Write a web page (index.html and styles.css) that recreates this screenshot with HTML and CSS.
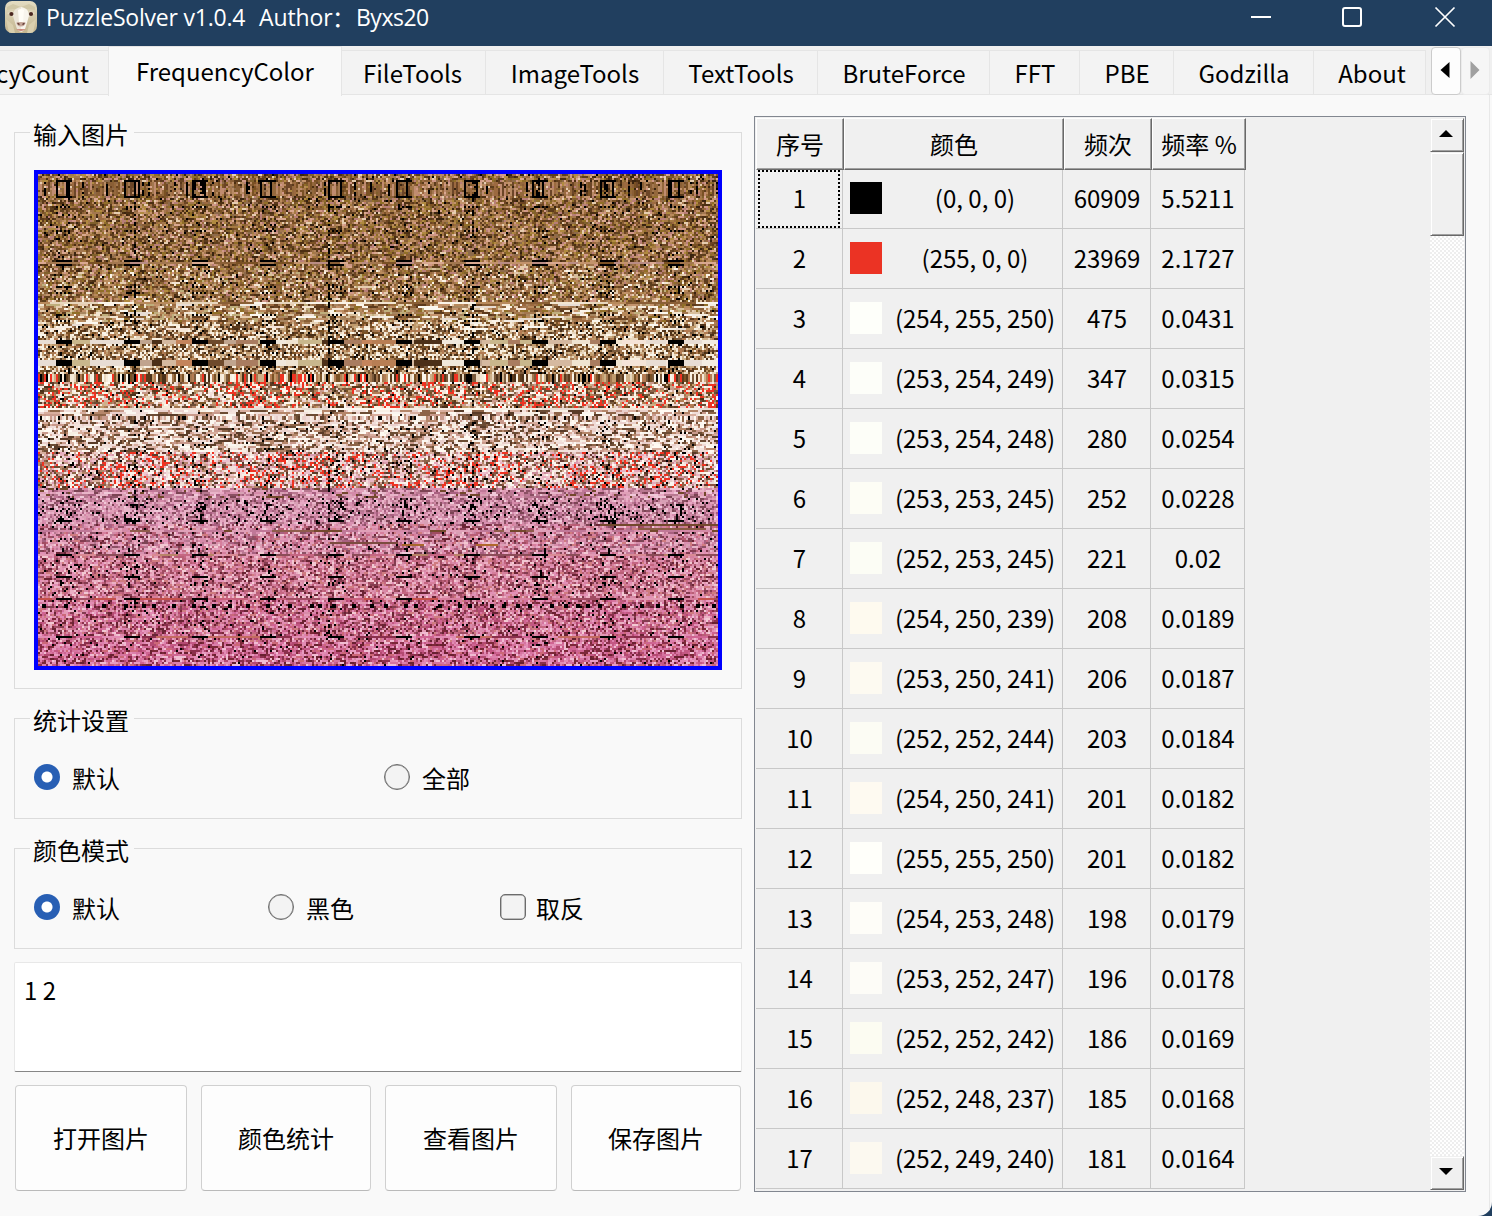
FILE: index.html
```html
<!DOCTYPE html>
<html lang="zh-CN">
<head>
<meta charset="utf-8">
<title>PuzzleSolver v1.0.4</title>
<link rel="stylesheet" href="styles.css">
</head>
<body>
<div class="window">
  <header class="titlebar">
    <svg class="logo" width="32" height="32" viewBox="0 0 32 32">
      <defs>
        <linearGradient id="wool" x1="0" y1="0" x2="0" y2="1"><stop offset="0" stop-color="#e3dcc2"/><stop offset="1" stop-color="#c3b58f"/></linearGradient>
        <clipPath id="tile"><rect width="32" height="32" rx="7"/></clipPath>
      </defs>
      <g clip-path="url(#tile)">
        <rect width="32" height="32" fill="url(#wool)"/>
        <path d="M2 6 8 3 16 6 24 3 30 6 30 9 22 8 16 9 8 8 2 9Z" fill="#d0c7a6"/>
        <path d="M1 18 8 24 10 32 4 32ZM31 18 24 24 22 32 28 32Z" fill="#d9cfae"/>
        <path d="M2 12 8 10 8 16ZM30 12 24 10 24 16Z" fill="#e9dfc8"/>
        <path d="M16 6C10 7 8 10 8 15L11 25Q12 30 16 31Z" fill="#ebe5d8"/>
        <path d="M16 6C22 7 24 10 24 15L21 25Q20 30 16 31Z" fill="#f8f5ed"/>
        <path d="M13 9Q16 7 19 9L18 21 14 21Z" fill="#fffdf6"/>
        <circle cx="6.4" cy="13" r="2.1" fill="#4a2720"/><circle cx="26" cy="13" r="2.1" fill="#4a2720"/>
        <path d="M11.500 21.500Q16 20.500 20.500 21.500 20.500 24.500 16.800 25.600L16 25.200 15.200 25.600Q11.500 24.500 11.500 21.500Z" fill="#c4a598"/>
        <path d="M12 22Q14 21 15 23.500L13.500 24ZM20 22Q18 21 17 23.500L18.500 24Z" fill="#6a443c"/>
        <path d="M11 28.300Q16 27.600 21 28.300 16 31.500 11 28.300Z" fill="#c98778"/>
      </g>
    </svg>
    <span class="title-name">PuzzleSolver v1.0.4</span>
    <span class="title-author">Author</span>
    <span class="title-colon">：</span>
    <span class="title-user">Byxs20</span>
    <svg class="win-controls" width="208" height="32" viewBox="0 0 208 32" fill="none" stroke="#fff">
      <path d="M3 17H23" stroke-width="2"/>
      <rect x="95" y="8" width="18" height="18" rx="2" stroke-width="2"/>
      <path d="M187.500 7.500 206.500 26.500M206.500 7.500 187.500 26.500" stroke-width="1.700"/>
    </svg>
  </header>

  <nav class="tabs">
    <div class="tab tab-cut"><span>cyCount</span></div>
    <div class="tab tab-active">FrequencyColor</div>
    <div class="tab tab-file">FileTools</div>
    <div class="tab tab-image">ImageTools</div>
    <div class="tab tab-text">TextTools</div>
    <div class="tab tab-brute">BruteForce</div>
    <div class="tab tab-fft">FFT</div>
    <div class="tab tab-pbe">PBE</div>
    <div class="tab tab-godzilla">Godzilla</div>
    <div class="tab tab-about">About</div>
    <div class="tab-scroll"><svg width="10" height="16" viewBox="0 0 10 16"><path d="M9.500 0V16L.5 8Z" fill="#000"/></svg></div>
    <div class="tab-scroll tab-scroll-off"><svg width="10" height="18" viewBox="0 0 10 18"><path d="M.5 0V18L9.500 9Z" fill="#a0a0a0"/></svg></div>
  </nav>

  <main class="page">
    <section class="left">
      <div class="group group-image">
        <span class="group-label">输入图片</span>
        <canvas class="picture" id="picture" width="340" height="246"></canvas>
      </div>
      <div class="group group-options">
        <span class="group-label">统计设置</span>
        <div class="options two">
          <label class="option"><i class="radio on"></i>默认</label>
          <label class="option"><i class="radio"></i>全部</label>
        </div>
      </div>
      <div class="group group-options">
        <span class="group-label">颜色模式</span>
        <div class="options three">
          <label class="option"><i class="radio on"></i>默认</label>
          <label class="option"><i class="radio"></i>黑色</label>
          <label class="option check-option"><i class="check"></i>取反</label>
        </div>
      </div>
      <div class="textbox">1 2</div>
      <div class="buttons">
        <button class="btn">打开图片</button>
        <button class="btn">颜色统计</button>
        <button class="btn">查看图片</button>
        <button class="btn">保存图片</button>
      </div>
    </section>

    <section class="table-frame">
      <div class="table">
        <div class="thead"><div>序号</div><div>颜色</div><div>频次</div><div>频率 %</div></div>
        <div class="row row-first"><div class="focused">1</div><div class="color"><i style="background:#000"></i><span>(0, 0, 0)</span></div><div>60909</div><div>5.5211</div></div>
        <div class="row"><div>2</div><div class="color"><i style="background:#eb3324"></i><span>(255, 0, 0)</span></div><div>23969</div><div>2.1727</div></div>
        <div class="row"><div>3</div><div class="color"><i style="background:rgb(254,255,250)"></i><span>(254, 255, 250)</span></div><div>475</div><div>0.0431</div></div>
        <div class="row"><div>4</div><div class="color"><i style="background:rgb(253,254,249)"></i><span>(253, 254, 249)</span></div><div>347</div><div>0.0315</div></div>
        <div class="row"><div>5</div><div class="color"><i style="background:rgb(253,254,248)"></i><span>(253, 254, 248)</span></div><div>280</div><div>0.0254</div></div>
        <div class="row"><div>6</div><div class="color"><i style="background:rgb(253,253,245)"></i><span>(253, 253, 245)</span></div><div>252</div><div>0.0228</div></div>
        <div class="row"><div>7</div><div class="color"><i style="background:rgb(252,253,245)"></i><span>(252, 253, 245)</span></div><div>221</div><div>0.02</div></div>
        <div class="row"><div>8</div><div class="color"><i style="background:rgb(254,250,239)"></i><span>(254, 250, 239)</span></div><div>208</div><div>0.0189</div></div>
        <div class="row"><div>9</div><div class="color"><i style="background:rgb(253,250,241)"></i><span>(253, 250, 241)</span></div><div>206</div><div>0.0187</div></div>
        <div class="row"><div>10</div><div class="color"><i style="background:rgb(252,252,244)"></i><span>(252, 252, 244)</span></div><div>203</div><div>0.0184</div></div>
        <div class="row"><div>11</div><div class="color"><i style="background:rgb(254,250,241)"></i><span>(254, 250, 241)</span></div><div>201</div><div>0.0182</div></div>
        <div class="row"><div>12</div><div class="color"><i style="background:rgb(255,255,250)"></i><span>(255, 255, 250)</span></div><div>201</div><div>0.0182</div></div>
        <div class="row"><div>13</div><div class="color"><i style="background:rgb(254,253,248)"></i><span>(254, 253, 248)</span></div><div>198</div><div>0.0179</div></div>
        <div class="row"><div>14</div><div class="color"><i style="background:rgb(253,252,247)"></i><span>(253, 252, 247)</span></div><div>196</div><div>0.0178</div></div>
        <div class="row"><div>15</div><div class="color"><i style="background:rgb(252,252,242)"></i><span>(252, 252, 242)</span></div><div>186</div><div>0.0169</div></div>
        <div class="row"><div>16</div><div class="color"><i style="background:rgb(252,248,237)"></i><span>(252, 248, 237)</span></div><div>185</div><div>0.0168</div></div>
        <div class="row"><div>17</div><div class="color"><i style="background:rgb(252,249,240)"></i><span>(252, 249, 240)</span></div><div>181</div><div>0.0164</div></div>
      </div>
      <div class="scrollbar">
        <div class="bevel step"><svg width="14" height="7" viewBox="0 0 14 7"><path d="M0 7H14L7 0Z"/></svg></div>
        <div class="bevel thumb"></div>
        <div class="track"></div>
        <div class="bevel step"><svg width="14" height="7" viewBox="0 0 14 7"><path d="M0 0H14L7 7Z"/></svg></div>
      </div>
    </section>
  </main>
</div>
<script src="picture.js"></script>
</body>
</html>
```
FILE: styles.css
```css
* { box-sizing: border-box; }
body {
  margin: 0;
  background: #213f5f;
  font-family: "Noto Sans CJK SC", sans-serif;
  font-size: 24px;
  line-height: 36px;
  color: #000;
}
i { font-style: normal; flex: none; }
.window {
  width: 1492px;
  height: 1216px;
  overflow: hidden;
  background: #f9f9f9;
  border-bottom-right-radius: 14px;
}

/* title bar */
.titlebar {
  display: flex;
  height: 46px;
  padding-left: 5px;
  background: #213f5f;
  color: #fff;
  font-family: "Open Sans", sans-serif;
  font-size: 23px;
  line-height: 35px;
  white-space: pre;
}
.logo { margin-top: 1px; flex: none; }
.title-name { width: 213px; margin-left: 9px; letter-spacing: -.21px; }
.title-author { width: 73px; letter-spacing: -.1px; }
.title-colon { width: 24px; font-family: "Noto Sans CJK SC", sans-serif; }
.title-user { width: 892px; letter-spacing: -.5px; }
.win-controls { flex: none; }

/* tab strip */
.tabs {
  display: flex;
  height: 49px;
  align-items: flex-end;
  background: #f0f0f0;
  box-shadow: inset 0 -1px #e5e5e5;
}
.tab {
  flex: none;
  display: flex;
  justify-content: center;
  align-items: center;
  height: 45px;
  padding-top: 1px;
  padding-left: 1px;
  background: #f3f3f3;
  border: 1px solid #e5e5e5;
  border-left: 0;
}
.tab-cut { width: 108px; justify-content: flex-end; padding-right: 19px; overflow: hidden; border-right: 0; }
.tab-active {
  width: 234px;
  height: 50px;
  margin-bottom: -1px;
  padding: 0 0 2px;
  background: #f9f9f9;
  border-left: 1px solid #e5e5e5;
  border-bottom: 0;
}
.tab-file { width: 144px; padding-right: 3px; }
.tab-image { width: 178px; }
.tab-text { width: 154px; }
.tab-brute { width: 172px; }
.tab-fft { width: 90px; }
.tab-pbe { width: 94px; }
.tab-godzilla { width: 140px; }
.tab-about { width: 112px; padding-left: 5px; }
.tab-scroll {
  flex: none;
  display: flex;
  align-items: center;
  justify-content: center;
  width: 30px;
  height: 48px;
  margin-left: 5px;
  padding: 0 2px 3px 0;
  background: #fdfdfd;
  border: 1px solid #ccc;
  border-radius: 4px;
}
.tab-scroll-off { margin-left: 0; width: 29px; background: #f6f6f6; border-color: #ebebeb; }

/* page */
.page {
  display: flex;
  height: 1121px;
  margin-right: 2px;
  padding: 21px 23px 0 14px;
  border-right: 1px solid #e8e8e8;
}
.left { width: 728px; margin-right: 12px; padding-top: 16px; }
.group { position: relative; border: 1px solid #dcdcdc; }
.group-label {
  position: absolute;
  left: 15px;
  top: -17px;
  padding: 0 5px 0 3px;
  background: #f9f9f9;
}
.group-image { height: 557px; padding: 37px 0 0 19px; }
.picture {
  display: block;
  width: 688px;
  height: 500px;
  border: 4px solid #00f;
  image-rendering: pixelated;
}
.group-options { height: 101px; margin-top: 29px; padding: 41px 0 0 19px; }
.options { display: grid; }
.two { grid-template-columns: 350px 1fr; }
.three { grid-template-columns: 234px 232px 1fr; }
.option { display: flex; align-items: center; gap: 12px; }
.radio, .check {
  width: 26px;
  height: 26px;
  margin-top: -2px;
  background: #f3f3f3;
  border: 1px solid #6c6c6c;
  box-shadow: inset 0 0 0 .5px #858585;
  border-radius: 50%;
}
.radio.on {
  border: 0;
  box-shadow: none;
  background: radial-gradient(circle, #fff 5px, #285fb4 6px);
}
.check { border-radius: 5px; }
.check-option { gap: 10px; }
.textbox {
  height: 110px;
  margin-top: 13px;
  padding: 9px;
  background: #fff;
  border: 1px solid #e8e8e8;
  border-bottom-color: #868686;
  border-radius: 2px;
}
.buttons {
  display: grid;
  grid-template-columns: 172px 170px 172px 170px;
  gap: 14px;
  margin-top: 13px;
  padding-left: 1px;
}
.btn {
  height: 106px;
  padding: 0;
  font: inherit;
  color: #000;
  background: #fdfdfd;
  border: 1px solid #d0d0d0;
  border-bottom-color: #bababa;
  border-radius: 4px;
}

/* frequency table */
.table-frame {
  display: flex;
  justify-content: space-between;
  width: 712px;
  height: 1076px;
  padding: 1px;
  background: #f0f0f0;
  border: 1px solid #828790;
}
.thead { display: grid; grid-template-columns: 88px 220px 88px 94px; height: 52px; }
.thead > div {
  display: flex;
  align-items: center;
  justify-content: center;
  border: 1px solid;
  border-color: #fff #696969 #696969 #fff;
  box-shadow: inset -1px -1px #a0a0a0;
}
.row { display: grid; grid-template-columns: 87px 220px 88px 94px; width: 489px; height: 60px; }
.row-first { height: 59px; }
.row > div {
  display: flex;
  align-items: center;
  justify-content: center;
  padding: 0 0 2px 1px;
  border: solid #c8c8c8;
  border-width: 0 1px 1px 0;
}
.row > .color { justify-content: flex-start; padding-left: 7px; }
.color i { width: 32px; height: 32px; }
.color span { flex: 1; text-align: center; padding-left: 6px; }
.focused { position: relative; }
.focused::after {
  content: "";
  position: absolute;
  inset: 0 2px 0 2px;
  border: 2px dotted #000;
}

/* scrollbar */
.scrollbar { display: flex; flex-direction: column; width: 34px; }
.bevel {
  display: flex;
  align-items: center;
  justify-content: center;
  background: #f0f0f0;
  border: 1px solid;
  border-color: #f0f0f0 #696969 #696969 #f0f0f0;
  box-shadow: inset 1px 1px #fff, inset -1px -1px #a0a0a0;
}
.step { height: 34px; padding: 0 3px 3px 0; }
.thumb { height: 84px; }
.track { flex: 1; background: conic-gradient(#fff 25%, #eee 0 50%, #fff 0 75%, #eee 0) 0 0 / 4px 4px; }
```
FILE: picture.js
```js
// Paints the loaded picture cell by cell: horizontal bands, each with its own palette.
(function () {
  const W = 340, H = 246;
  const ctx = document.getElementById("picture").getContext("2d");
  let seed = 20104;
  function rnd() {
    seed = (seed + 0x6D2B79F5) | 0;
    let t = Math.imul(seed ^ (seed >>> 15), 1 | seed);
    t = (t + Math.imul(t ^ (t >>> 7), 61 | t)) ^ t;
    return ((t ^ (t >>> 14)) >>> 0) / 4294967296;
  }
  const pick = list => list[Math.floor(rnd() * list.length)];
  const words = s => s.split(" ");
  const brown = words("#a3774f #8a5f36 #5c3a1c #4c2f12 #c3936c #d9a890 #7a5124 #916f28 #b88a5c #3a2410 #e6cdb0 #9c6a40 #b77e78 #6b4422 #a57a42 #8d6a4a #5d3e1c #d09888 #80602c #b08a40");
  const tan = words("#a3774f #8a5f36 #5c3a1c #c3936c #f3e6d2 #fbf4e8 #916f28 #b88a5c #e6cdb0 #9c6a40 #d8bf9c #6b4422 #bfae7c #a88660");
  const check = words("#fbf6ea #f6ead8 #e8d6bd #5c3a1c #7a5a3c #a3774f #c09a6c #7a5124 #b37c53 #4a3018 #f7efe0 #cdb088");
  const cream = words("#fbf6f0 #f3e2dc #ead0cc #f7efe4 #6c4c34 #8d6448 #b5866a #5a3c28 #d8ae9e #f0dcd8 #c99a8c #fffaf2");
  const blush = words("#f0c8cc #e8b4c2 #f5dedc #d99cae #8c5040 #9f6c5c #c98c98 #faf0ea #6a3830 #e6a8bc #eac0cc");
  const mauve = words("#e0a0b8 #d48aa8 #e8b4c8 #c07898 #a86080 #8c5064 #f0c8d8 #d890b0 #7c4454 #b87890 #d8a0b4 #e8a8c4");
  const pink = words("#e39ab4 #d67f9d #c56682 #a14c62 #843c50 #ebb0c4 #f2c8d2 #b95e76 #d88ba8 #6a2434 #cf7c80 #e290b6");
  const rose = words("#dc80ac #cf6492 #b44a72 #8b2f4c #6a2030 #e89cc0 #f0bcd2 #c45884 #d674a0 #7c2838 #cc6878 #e28cb4");

  // first row, palette, chance to repeat the cell on the left, black share, red share
  const bands = [
    [0, brown, .12, .015, 0], [46, brown.concat(tan), .12, .02, 0],
    [64, tan, .4, .01, 0], [74, check, .12, .03, 0], [85, check, .05, .03, 0],
    [96, check, .05, .05, 0], [104, cream.concat(check), .25, .015, .22],
    [117, cream, .68, .01, 0], [121, cream, .2, .03, 0], [124, cream, .38, .025, 0],
    [139, blush.concat(cream), .18, .035, .2], [157, mauve.concat(["#73482c"]), .4, .01, 0],
    [162, mauve, .1, .07, 0], [175, mauve.concat(pink), .2, .02, 0],
    [190, pink, .12, .025, 0], [212, rose.concat(pink), .1, .02, 0], [234, rose, .18, .01, 0]
  ];
  const dot = (x, y, w, h, color) => { ctx.fillStyle = color; ctx.fillRect(x, y, w, h); };
  let band = 0;
  for (let y = 0; y < H; y++) {
    while (band + 1 < bands.length && y >= bands[band + 1][0]) band++;
    const [, palette, repeat, black, red] = bands[band];
    let color = pick(palette);
    for (let x = 0; x < W; x++) {
      const mark = (x + 25) % 34 < 8;
      if (rnd() > repeat) color = pick(palette);
      let c = color;
      const cluster = .75 + .35 * Math.sin(x / 13 + y / 9) + .35 * Math.sin(x / 5.3 - y / 3);
      if (rnd() < red * Math.max(.35, cluster)) c = "#ee3322";
      if (rnd() < black * (mark ? 2.6 : 1)) c = "#000";
      dot(x, y, 1, 1, c);
    }
  }

  // rows that hold one colour per column
  function stripes(top, height, palette, black, red) {
    for (let x = 0; x < W; x++) {
      let c = rnd() < black ? "#000" : pick(palette);
      if (rnd() < red) c = "#ee3322";
      dot(x, top, 1, height, c);
    }
  }
  stripes(4, 7, words("#a3774f #8a5f36 #6c4628 #b88a64 #9c6a40 #c08c70 #7a5124 #94683c"), .09, 0);
  for (let y = 4; y < 11; y++) {
    for (let x = 0; x < W; x++) if (rnd() < .35) dot(x, y, 1, 1, pick(brown));
  }
  stripes(100, 4, check, .14, .13);
  stripes(121, 2, cream, .1, 0);

  // long flat runs of one shade
  function runs(top, height, palette, lo, hi) {
    for (let x = 0; x < W;) {
      const n = lo + Math.floor(rnd() * (hi - lo));
      dot(x, top, n, height, pick(palette));
      x += n;
    }
  }
  const flat = words("#b87e54 #4c3018 #f0e8dc #c9b78c #a97c60 #c0a48e #6e4a2c #d5b9a0 #c4845c #efe3d0");
  const light = words("#f3ece2 #fbf8f0 #f5e4d8 #e8ddd4");
  runs(64, 1, words("#e8d6bd #f3e6d2 #b88a5c #8a5f36 #fbf4e8"), 6, 26);
  for (let i = 0; i < 46; i++) {
    dot(Math.floor(rnd() * W), 65 + Math.floor(rnd() * 14), 4 + Math.floor(rnd() * 9), 1, pick(light));
  }
  for (let x = 0; x < W;) {
    const n = 3 + Math.floor(rnd() * 12);
    const c = pick(x < 42 && x > 25 || x < 9 || x > 285 ? light : flat);
    dot(x, 83, n, 2, c);
    dot(x, 93, n, 3, c);
    x += n;
  }
  runs(117, 1, light, 8, 30);
  runs(44, 1, words("#a3774f #c3936c #8a5f36 #d9a890 #7a5124 #b98c84"), 3, 12);
  runs(178, 1, words("#73482c #d48aa8 #c07898 #8f5c4c #e0a0b8"), 3, 14);
  runs(190, 1, words("#d98a94 #b98468 #e39ab4 #8c4c58 #c56682"), 4, 14);
  runs(212, 1, words("#c8607c #e39ab4 #a14c62 #c4504c #d67f9d"), 4, 14);
  runs(231, 1, words("#cf6492 #e28cb4 #8b2f4c #c46a60"), 4, 14);
  dot(281, 175, 59, 1, "#73482c");
  dot(300, 177, 34, 1, "#8a5a44");
  dot(146, 184, 34, 1, "#7c4c40");
  dot(182, 185, 11, 1, "#a8662c");
  dot(219, 185, 11, 1, "#b0682c");
  for (let x = 2; x < W; x += 4 + Math.floor(rnd() * 9)) dot(x, 215, 2, 2, "#000");

  // black marks recurring every 34 columns
  for (let x = 9, i = 0; x < W; x += 34, i++) {
    dot(x, 3, 8, 1, "#000");
    dot(x, 3, 1, 8, "#000");
    dot(x + (i % 2 ? 5 : 6), 3, 1, 8, "#000");
    dot(x, 11, 8, 1, "#000");
    dot(x, 43, 8, 1, "#000");
    dot(x, 45, 8, 1, "#000");
    dot(x, 83, 8, 2, "#000");
    dot(x, 93, 8, 3, "#000");
    [173, 190, 201, 212, 231].forEach(y => dot(x, y, 8, 1, "#000"));
    [16, 28, 56, 59, 70, 73].forEach(y => {
      for (let k = i % 2; k < 8; k += 2) dot(x + k, y, 1, 1, "#000");
    });
    for (const y of [165, 168, 171, 187, 198, 204]) {
      if (rnd() < .6) dot(x + 2 + Math.floor(rnd() * 5), y, 1, 2, "#000");
    }
  }
  [[48, .4], [145, .45], [217, .2]].forEach(([x, share]) => {
    for (let y = 3; y < 230; y++) if (rnd() < share * (y < 100 || y > 140 && y < 175 ? 1 : .3)) dot(x, y, 1, 1, "#000");
  });
})();
```
